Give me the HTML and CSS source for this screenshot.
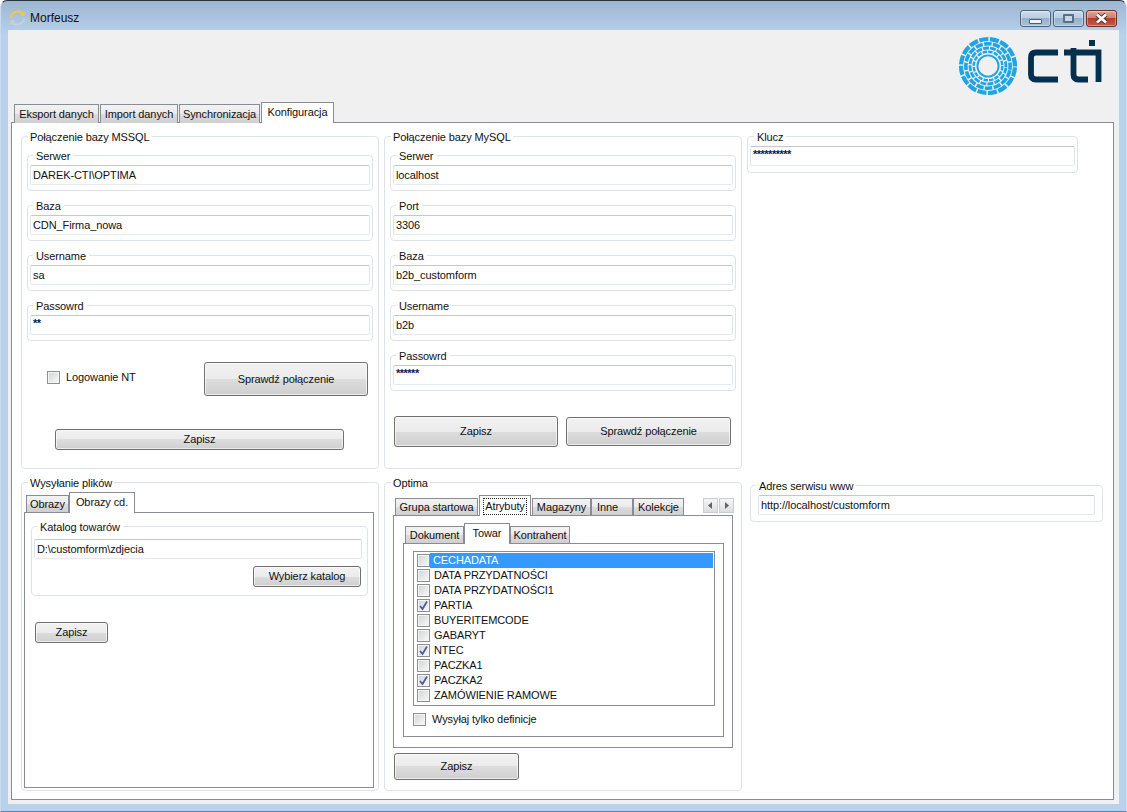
FILE: index.html
```html
<!DOCTYPE html>
<html lang="pl">
<head>
<meta charset="utf-8">
<title>Morfeusz</title>
<link rel="stylesheet" href="styles.css">
</head>
<body>
<div class="window">
  <header class="titlebar">
    <svg class="app-icon" width="17" height="18" viewBox="0 0 17 18" aria-hidden="true">
      <path d="M2 9 A7 7 0 0 1 14 4.5" fill="none" stroke="#f1c84c" stroke-width="2.2"/>
      <path d="M15.5 2 L15.5 7 L10.8 6.4 Z" fill="#f1c84c"/>
      <path d="M15 9.5 A7 7 0 0 1 3 13.5" fill="none" stroke="#c6d0da" stroke-width="2.2"/>
      <path d="M1.5 16 L1.5 11 L6.2 11.6 Z" fill="#c6d0da"/>
    </svg>
    <span class="app-title">Morfeusz</span>
    <div class="caption-buttons">
      <div class="cap-btn"><span class="glyph-min"></span></div>
      <div class="cap-btn"><span class="glyph-max"></span></div>
      <div class="cap-btn cap-close">
        <svg width="15" height="11" viewBox="0 0 15 11" aria-hidden="true"><path d="M3 1.5 L12 9.5 M12 1.5 L3 9.5" stroke="#4a2a26" stroke-width="4.4"/><path d="M3 1.5 L12 9.5 M12 1.5 L3 9.5" stroke="#fff" stroke-width="2.8"/></svg>
      </div>
    </div>
  </header>

  <div class="client">
    <div class="brand">
      <svg class="logo" width="146" height="64" viewBox="0 0 146 64" role="img" aria-label="cti">
        <g fill="none" stroke="#1ea5e3" transform="translate(30 30)">
          <circle r="10.6" stroke-width="1.9"/>
          <circle r="14.3" stroke-width="2.4" stroke-dasharray="4.4 1.2"/>
          <circle r="18" stroke-width="2.8" stroke-dasharray="5.8 1.27" transform="rotate(5)"/>
          <circle r="22.2" stroke-width="3.6" stroke-dasharray="7.3 1.42" transform="rotate(11)"/>
          <circle r="27" stroke-width="4.2" stroke-dasharray="9.1 1.5" transform="rotate(3)"/>
        </g>
        <g fill="none" stroke="#04304f" stroke-width="5.8">
          <path d="M100 16.5 H78 Q73 16.5 73 21.5 V38.5 Q73 43.5 78 43.5 H100"/>
          <path d="M115.5 12 V38.5 Q115.5 43.5 120.5 43.5 H130"/>
          <path d="M106 16.5 H140.5 V46"/>
        </g>
        <rect x="131" y="4" width="6" height="6" fill="#04304f"/>
      </svg>
    </div>

    <nav class="tabs tabs-main">
      <div class="tab w-eksport">Eksport danych</div>
      <div class="tab w-import">Import danych</div>
      <div class="tab w-sync">Synchronizacja</div>
      <div class="tab tab-active w-konfig">Konfiguracja</div>
    </nav>

    <main class="panel panel-main">
      <div class="columns">
        <section class="group group-mssql">
          <span class="legend">Połączenie bazy MSSQL</span>
          <div class="stack">
            <div class="field"><span class="legend legend-sm">Serwer</span><div class="input">DAREK-CTI\OPTIMA</div></div>
            <div class="field"><span class="legend legend-sm">Baza</span><div class="input">CDN_Firma_nowa</div></div>
            <div class="field"><span class="legend legend-sm">Username</span><div class="input">sa</div></div>
            <div class="field"><span class="legend legend-sm">Passowrd</span><div class="input input-pass">**</div></div>
          </div>
          <div class="nt-row">
            <label class="check-label"><span class="cb"></span>Logowanie NT</label>
            <div class="btn btn-check-ms">Sprawdź połączenie</div>
          </div>
          <div class="btn btn-save-ms">Zapisz</div>
        </section>

        <section class="group group-mysql">
          <span class="legend">Połączenie bazy MySQL</span>
          <div class="stack">
            <div class="field"><span class="legend legend-sm">Serwer</span><div class="input">localhost</div></div>
            <div class="field"><span class="legend legend-sm">Port</span><div class="input">3306</div></div>
            <div class="field"><span class="legend legend-sm">Baza</span><div class="input">b2b_customform</div></div>
            <div class="field"><span class="legend legend-sm">Username</span><div class="input">b2b</div></div>
            <div class="field"><span class="legend legend-sm">Passowrd</span><div class="input input-pass">******</div></div>
          </div>
          <div class="mysql-actions">
            <div class="btn btn-save-my">Zapisz</div>
            <div class="btn btn-check-my">Sprawdź połączenie</div>
          </div>
        </section>

        <section class="group group-key">
          <span class="legend legend-sm">Klucz</span>
          <div class="input input-pass">**********</div>
        </section>

        <section class="group group-files">
          <span class="legend">Wysyłanie plików</span>
          <div class="tabs tabs-files">
            <div class="tab w-obrazy">Obrazy</div>
            <div class="tab tab-active w-obrazycd">Obrazy cd.</div>
          </div>
          <div class="panel panel-files">
            <div class="group group-catalog">
              <span class="legend legend-sm">Katalog towarów</span>
              <div class="input">D:\customform\zdjecia</div>
              <div class="btn btn-browse">Wybierz katalog</div>
            </div>
            <div class="btn btn-save-files">Zapisz</div>
          </div>
        </section>

        <section class="group group-optima">
          <span class="legend">Optima</span>
          <div class="tabs tabs-optima">
            <div class="tab w-grupa">Grupa startowa</div>
            <div class="tab tab-active w-atrybuty"><span class="focus">Atrybuty</span></div>
            <div class="tab w-magazyny">Magazyny</div>
            <div class="tab w-inne">Inne</div>
            <div class="tab w-kolekcje">Kolekcje</div>
            <div class="scrollers">
              <div class="scroller"><svg width="5" height="7" viewBox="0 0 5 7" aria-hidden="true"><path d="M4 0 V7 L0 3.5 Z" fill="#5c6570"/></svg></div>
              <div class="scroller"><svg width="5" height="7" viewBox="0 0 5 7" aria-hidden="true"><path d="M1 0 V7 L5 3.5 Z" fill="#5c6570"/></svg></div>
            </div>
          </div>
          <div class="panel panel-optima">
            <div class="tabs tabs-inner">
              <div class="tab w-dokument">Dokument</div>
              <div class="tab tab-active w-towar">Towar</div>
              <div class="tab w-kontrahent">Kontrahent</div>
            </div>
            <div class="panel panel-inner">
              <div class="listbox">
                <div class="row"><span class="cb"></span><span class="row-text row-selected">CECHADATA</span></div>
                <div class="row"><span class="cb"></span><span class="row-text">DATA PRZYDATNOŚCI</span></div>
                <div class="row"><span class="cb"></span><span class="row-text">DATA PRZYDATNOŚCI1</span></div>
                <div class="row"><span class="cb"><svg width="11" height="11" viewBox="0 0 11 11" aria-hidden="true"><path d="M2 6 L4.5 9 L9 1.5" fill="none" stroke="#4a5a9a" stroke-width="1.7"/></svg></span><span class="row-text">PARTIA</span></div>
                <div class="row"><span class="cb"></span><span class="row-text">BUYERITEMCODE</span></div>
                <div class="row"><span class="cb"></span><span class="row-text">GABARYT</span></div>
                <div class="row"><span class="cb"><svg width="11" height="11" viewBox="0 0 11 11" aria-hidden="true"><path d="M2 6 L4.5 9 L9 1.5" fill="none" stroke="#4a5a9a" stroke-width="1.7"/></svg></span><span class="row-text">NTEC</span></div>
                <div class="row"><span class="cb"></span><span class="row-text">PACZKA1</span></div>
                <div class="row"><span class="cb"><svg width="11" height="11" viewBox="0 0 11 11" aria-hidden="true"><path d="M2 6 L4.5 9 L9 1.5" fill="none" stroke="#4a5a9a" stroke-width="1.7"/></svg></span><span class="row-text">PACZKA2</span></div>
                <div class="row"><span class="cb"></span><span class="row-text">ZAMÓWIENIE RAMOWE</span></div>
              </div>
              <label class="check-label check-defs"><span class="cb"></span>Wysyłaj tylko definicje</label>
            </div>
          </div>
          <div class="btn btn-save-optima">Zapisz</div>
        </section>

        <section class="group group-www">
          <span class="legend legend-sm">Adres serwisu www</span>
          <div class="input">http://localhost/customform</div>
        </section>
      </div>
    </main>
  </div>
</div>
</body>
</html>
```

FILE: styles.css
```css
* { box-sizing: border-box; }
html, body { margin: 0; padding: 0; }
body {
  width: 1127px;
  height: 812px;
  overflow: hidden;
  background: #fff;
  font: 11px/15px "Liberation Sans", Arial, sans-serif;
  letter-spacing: -.1px;
  color: #111;
}

.window {
  width: 1127px;
  height: 812px;
  display: flex;
  flex-direction: column;
  background: linear-gradient(180deg, #9db6d2 0, #b9d1ea 34px, #b9d1ea 100%);
  border: 1px solid #c8dcf0;
  border-top: 1px solid #2c3238;
  border-bottom: 1px solid #1f9fbd;
  border-radius: 7px 7px 0 0;
}

/* title bar */
.titlebar {
  height: 29px;
  flex: none;
  display: flex;
  align-items: flex-start;
  padding: 8px 9px 0 8px;
}
.app-icon { flex: none; }
.app-title { margin: 2px 0 0 4px; font-size: 12px; letter-spacing: 0; color: #0c1117; }
.caption-buttons { margin: 1px 0 0 auto; display: flex; gap: 2px; }
.cap-btn {
  width: 31px;
  height: 17px;
  display: flex;
  align-items: center;
  justify-content: center;
  border: 1px solid #4f6379;
  border-radius: 3px;
  background: linear-gradient(180deg, #cfdded 0, #b9cde2 45%, #98b0ca 50%, #a9c0d9 100%);
  box-shadow: inset 0 0 0 1px rgba(255,255,255,.35);
}
.cap-close {
  border-color: #6d2f28;
  background: linear-gradient(180deg, #e2a396 0, #d27e6e 45%, #b53c2c 50%, #c85a48 100%);
}
.glyph-min {
  width: 13px;
  height: 5px;
  margin-top: 5px;
  background: #f2f5f9;
  border: 1px solid #4b5e75;
  border-radius: 1px;
}
.glyph-max {
  width: 11px;
  height: 9px;
  border: 2px solid #56708c;
  background: #c7d6e6;
  border-radius: 1px;
}

/* client area */
.client {
  flex: 1;
  min-height: 0;
  margin: 0 7px 7px 7px;
  padding: 0 5px 4px 3px;
  display: flex;
  flex-direction: column;
  background: #f0f0f0;
}
.brand {
  height: 72px;
  flex: none;
  display: flex;
  justify-content: flex-end;
  padding: 6px 10px 0 0;
}

/* tabs */
.tabs {
  display: flex;
  align-items: flex-end;
  flex: none;
  position: relative;
  z-index: 1;
  margin-bottom: -1px;
}
.tab {
  height: 18px;
  margin-right: 1px;
  display: flex;
  align-items: center;
  justify-content: center;
  border: 1px solid #898c95;
  background: linear-gradient(180deg, #f2f2f2 0, #ebebeb 50%, #dddddd 50%, #cfcfcf 100%);
  white-space: nowrap;
  padding-top: 1px;
}
.tab-active {
  height: 21px;
  margin: 0 0 0 -1px;
  background: #fff;
  border-bottom: 0;
  padding: 0 0 2px;
}
.tabs-main { height: 21px; padding-left: 3px; }
.tabs-main .tab { border-bottom: 0; height: 19px; }
.tabs-main .tab-active { height: 21px; margin-left: 0; }
.w-eksport { width: 85px; }
.w-import { width: 78px; }
.w-sync { width: 81px; }
.w-konfig { width: 73px; }

.panel {
  background: #fff;
  border: 1px solid #898c95;
}
.panel-main {
  flex: 1;
  min-height: 0;
  padding: 13px 9px 0;
}

.columns {
  display: grid;
  grid-template-columns: 358px 358px 356px;
  grid-template-rows: 333px 309px;
  column-gap: 5px;
  row-gap: 13px;
}

/* group boxes */
.group {
  position: relative;
  border: 1px solid #dce3ea;
  border-radius: 4px;
  padding: 18px 5px 0;
  background: #fff;
}
.legend {
  position: absolute;
  top: -7px;
  left: 6px;
  padding: 0 2px 0 2px;
  background: #fff;
  line-height: 14px;
}
.legend-sm { left: 5px; padding: 0 3px; top: -7px; }

.stack { display: flex; flex-direction: column; gap: 14px; }
.field {
  position: relative;
  height: 36px;
  padding: 9px 2px 0;
  border: 1px solid #dce3ea;
  border-radius: 4px;
}
.input {
  height: 20px;
  padding: 2px 2px 0;
  border: 1px solid;
  border-color: #c4c8ce #dfe5ec #e3e9ef #dfe5ec;
  border-radius: 2px;
  background: #fff;
  white-space: nowrap;
  overflow: hidden;
}
.input-pass {
  font-weight: 700;
  font-size: 11px;
  line-height: 9px;
  letter-spacing: -.5px;
  color: #0a2050;
  padding-top: 3px;
}

/* buttons */
.btn {
  display: flex;
  align-items: center;
  justify-content: center;
  border: 1px solid #707070;
  border-radius: 3px;
  background: linear-gradient(180deg, #f2f2f2 0, #ebebeb 50%, #dddddd 50%, #cfcfcf 100%);
  box-shadow: inset 0 0 0 1px rgba(255,255,255,.6);
  white-space: nowrap;
}

/* checkboxes */
.cb {
  width: 13px;
  height: 13px;
  flex: none;
  display: flex;
  align-items: center;
  justify-content: center;
  border: 1px solid #8e8f8f;
  background: linear-gradient(135deg, #cfd2d6 0, #f2f2f2 80%);
  box-shadow: inset 0 0 0 1px #f4f4f4;
}
.check-label { display: flex; align-items: center; gap: 6px; }

/* MSSQL */
.nt-row {
  display: flex;
  align-items: flex-start;
  margin-top: 21px;
  padding: 0 5px 0 20px;
}
.nt-row .check-label { margin-top: 8px; }
.btn-check-ms { width: 164px; height: 34px; margin-left: auto; }
.btn-save-ms { width: 289px; height: 21px; margin: 33px 0 0 28px; }

/* MySQL */
.mysql-actions { display: flex; margin-top: 25px; padding-left: 4px; gap: 8px; align-items: flex-start; }
.btn-save-my { width: 164px; height: 31px; }
.btn-check-my { width: 165px; height: 29px; margin-top: 1px; }

/* right column */
.group-key { width: 331px; height: 37px; padding: 9px 2px 0; }
.group-www { width: 353px; height: 37px; margin: 3px 0 0 3px; padding: 9px 7px 0; }
.group-key .legend-sm { left: 6px; }
.group-www .legend-sm { left: 5px; }

/* files */
.group-files { padding: 9px 2px 0; }
.group-files .tabs { height: 21px; padding-left: 2px; }
.tabs-files .tab { height: 18px; }
.tabs-files .tab-active { height: 21px; padding-top: 0; }
.w-obrazy { width: 43px; }
.w-obrazycd { width: 66px; }
.panel-files { height: 276px; width: 350px; padding: 13px 6px 0; }
.group-catalog { height: 70px; width: 337px; padding: 12px 5px 0 2px; }
.btn-browse { width: 108px; height: 21px; margin: 7px 0 0 219px; }
.btn-save-files { width: 73px; height: 21px; margin: 26px 0 0 4px; }

/* optima */
.group-optima { padding: 12px 8px 0; }
.tabs-optima { height: 21px; padding-left: 2px; }
.tabs-optima .tab { height: 18px; margin-right: 0; }
.tabs-optima .tab-active { height: 21px; margin: 0 1px 0 1px; padding: 1px 0 0; }
.focus { border: 1px dotted #222; padding: 0 1px; line-height: 15px; }
.w-grupa { width: 83px; }
.w-atrybuty { width: 52px; }
.w-magazyny { width: 59px; }
.tabs-optima .w-inne { width: 42px; justify-content: flex-start; padding-left: 5px; }
.w-kolekcje { width: 51px; }
.scrollers { margin-left: auto; margin-bottom: 3px; margin-right: -1px; display: flex; gap: 1px; }
.scroller {
  width: 15px;
  height: 15px;
  display: flex;
  align-items: center;
  justify-content: center;
  border: 1px solid #c9ccd1;
  background: linear-gradient(180deg, #f6f6f6, #dedede);
}
.panel-optima { height: 233px; width: 340px; padding: 7px 9px 0; }
.tabs-inner { height: 21px; padding-left: 2px; }
.tabs-inner .tab { height: 18px; }
.tabs-inner .tab-active { height: 21px; }
.w-dokument { width: 59px; margin-right: 0; }
.tabs-inner .w-dokument { margin-right: 0; }
.tabs-inner .w-towar { width: 46px; margin: 0; }
.w-kontrahent { width: 60px; }
.panel-inner { height: 194px; width: 321px; padding: 7px 7px 0 9px; }
.listbox {
  width: 302px;
  height: 155px;
  padding: 1px 1px 1px 3px;
  border: 1px solid #898c95;
}
.row { display: flex; align-items: center; height: 15px; }
.row-text { flex: 1; height: 15px; padding-left: 4px; line-height: 15px; white-space: nowrap; }
.row-selected { background: #3399ff; color: #fff; padding-left: 3px; }
.check-defs { margin-top: 6px; }
.btn-save-optima { width: 125px; height: 27px; margin: 5px 0 0 1px; }
```
